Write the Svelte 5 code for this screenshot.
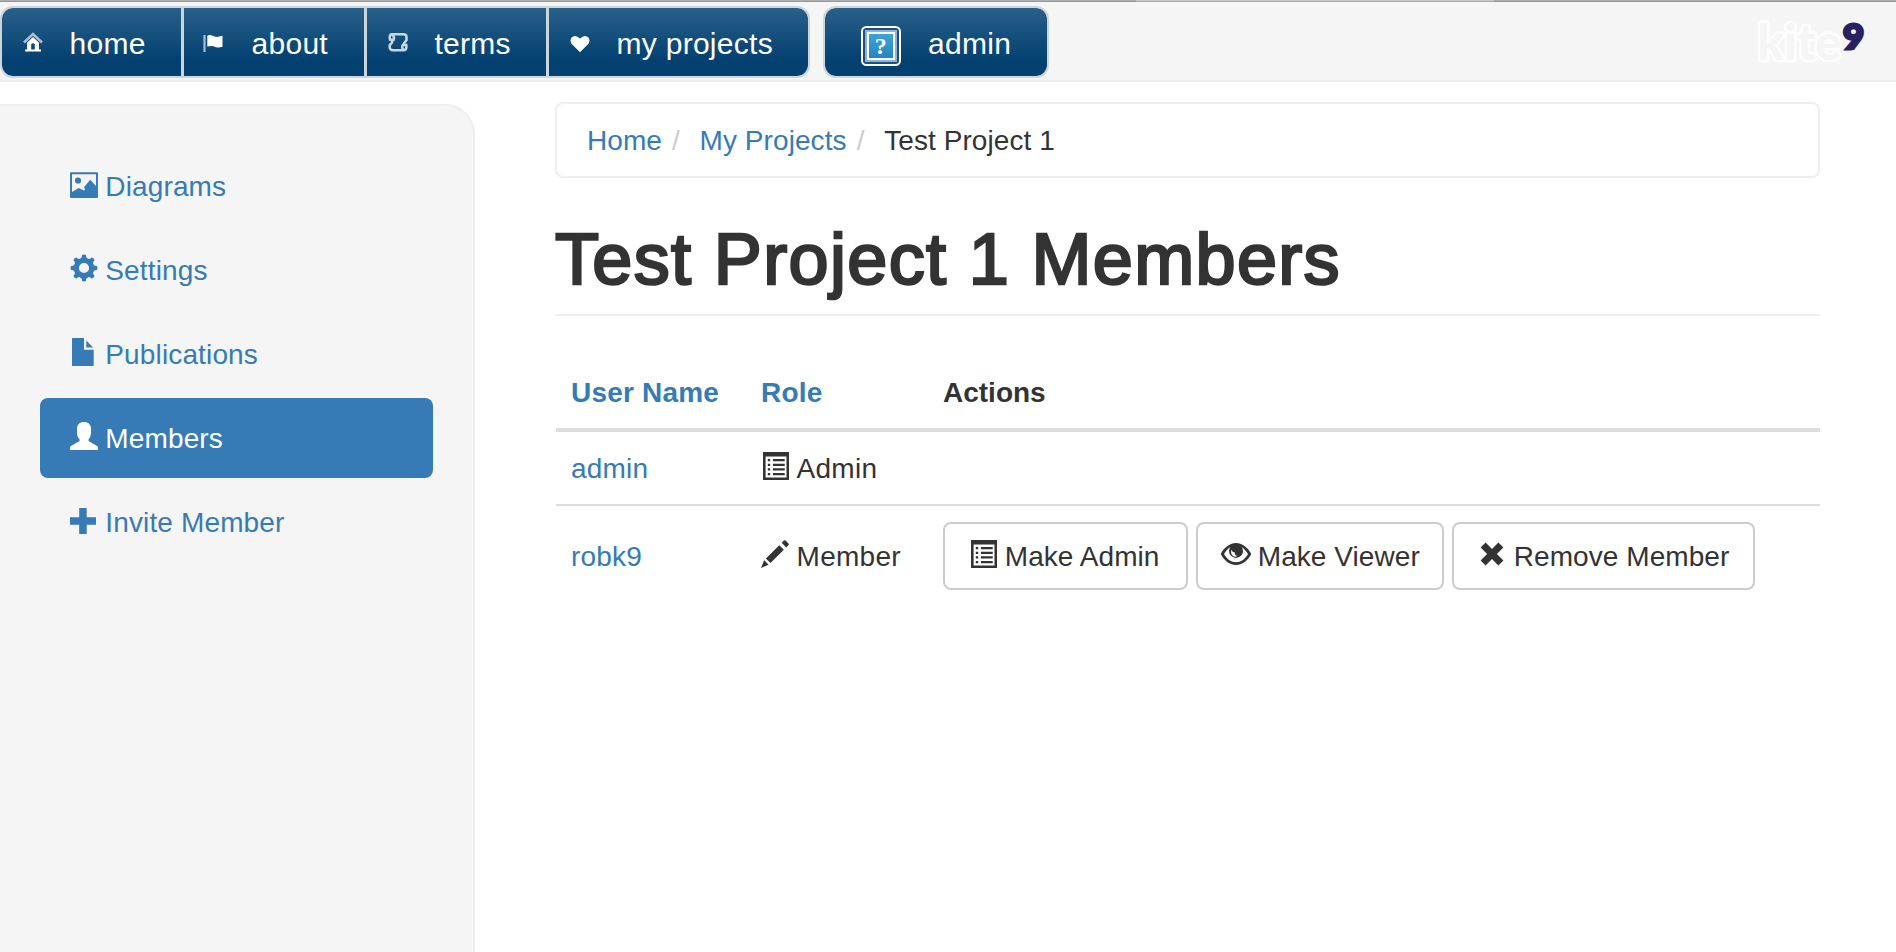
<script>
  const nav = [
    { label: 'home', icon: 'home', width: 179 },
    { label: 'about', icon: 'flag', width: 180 },
    { label: 'terms', icon: 'scroll', width: 179 },
    { label: 'my projects', icon: 'heart', width: 259 }
  ];
  const side = [
    { label: 'Diagrams', icon: 'picture' },
    { label: 'Settings', icon: 'cog' },
    { label: 'Publications', icon: 'file' },
    { label: 'Members', icon: 'user', active: true },
    { label: 'Invite Member', icon: 'plus' }
  ];
  const actions = [
    { label: 'Make Admin', icon: 'list', width: 245 },
    { label: 'Make Viewer', icon: 'eye', width: 248 },
    { label: 'Remove Member', icon: 'remove', width: 303 }
  ];
</script>

{#snippet glyph(name)}
  <svg class="glyph" viewBox="0 0 28 28" width="28" height="28" fill="currentColor" aria-hidden="true">
    {#if name === 'picture'}
      <path fill-rule="evenodd" d="M1 2.3H27Q28 2.3 28 3.3V27Q28 28 27 28H1Q0 28 0 27V3.3Q0 2.3 1 2.3ZM2 4.3V22L8.500 18L14 20.500L15.200 19.800L14 17.200L20.200 9.800L26 16V4.300Z" />
      <circle cx="8" cy="10.500" r="3.100" />
    {:else if name === 'cog'}
      <g transform="translate(14 14)">
        {#each [0, 45, 90, 135, 180, 225, 270, 315] as a}
          <path transform="rotate({a})" d="M-4.200-8L-2.200-11V-12.300Q-2-13.500 0-13.500Q2-13.500 2.200-12.300V-11L4.200-8Z" />
        {/each}
        <circle r="7.700" fill="none" stroke="currentColor" stroke-width="5.200" />
      </g>
    {:else if name === 'file'}
      <path d="M2.600 0H14V11.700H23.700V27.400Q23.700 28 23 28H2.600Q2 28 2 27.400V.6Q2 0 2.600 0ZM16.300 2.500L23 9.400H16.300Z" />
    {:else if name === 'user'}
      <path d="M14 0C18.500 0 21 2.700 21 7V10.500C21 13.500 19.800 16.200 18.600 17.300V19L27 24Q28 24.700 28 25.500V28H0V25.500Q0 24.700 1 24L9.600 19V17.300C8.200 16.200 7 13.500 7 10.500V7C7 2.700 9.500 0 14 0Z" />
    {:else if name === 'plus'}
      <path d="M9.200 2H16.700V11.200H26V18.700H16.700V28H9.200V18.700H0V11.200H9.200Z" />
    {:else if name === 'list'}
      <path fill-rule="evenodd" d="M2 0H28V28H2ZM4.600 4.400V25.500H25.500V4.400Z" />
      <path d="M6.800 7H9.200V9.300H6.800ZM11.900 7H23.700V9.300H11.900ZM6.800 11.700H9.200V14H6.800ZM11.900 11.700H23.700V14H11.900ZM6.800 16.300H9.200V18.600H6.800ZM11.900 16.300H23.700V18.600H11.900ZM6.800 21H9.200V23.300H6.800ZM11.900 21H23.700V23.300H11.900Z" />
    {:else if name === 'pencil'}
      <path d="M0 28L3.200 20.300L7.600 24.700ZM4.900 18.500L18.300 5.200L22.800 9.700L9.500 23.100ZM20.700 2.800L22.900.6Q23.700-.2 24.600.6L27.500 3.500Q28.300 4.300 27.500 5.100L25.200 7.400Z" />
    {:else if name === 'eye'}
      <path fill-rule="evenodd" d="M-1.300 14C2.500 7 8 3 14 3S25.500 7 29.300 14C25.500 21 20 25 14 25S2.500 21 -1.300 14ZM2 14.100C5 19.500 9.300 22.300 14 22.300S23 19.500 26 14.100C23 9 18.500 5.600 14 5.600S5 9 2 14.100Z" />
      <circle cx="14" cy="10.900" r="7" />
      <path d="M9.800 9.400Q7.800 13.300 11 15.900Q13.300 17.300 15.400 16Q12.300 15.500 12.800 12.300Q10 12.300 9.800 9.400Z" fill="#fff" />
    {:else if name === 'remove'}
      <path d="M7.600 2.600L14 9.100L20.400 2.600L25.400 7.600L18.900 14L25.400 20.400L20.400 25.400L14 18.900L7.600 25.400L2.600 20.400L9.100 14L2.600 7.600Z" />
    {/if}
  </svg>
{/snippet}

{#snippet navIcon(name)}
  <svg class="nav-icon {name}" viewBox="0 0 20 20" width="20" height="20" aria-hidden="true">
    {#if name === 'home'}
      <path d="M1 10.500L10 2L19 10.500" fill="none" stroke="#a9bed0" stroke-width="2.600" />
      <path fill-rule="evenodd" d="M10 5L16 10.800V17.500H18V19.500H2V17.500H4V10.800ZM8.200 12V17.500H11.800V12Q10 10.500 8.200 12Z" fill="#fff" />
    {:else if name === 'flag'}
      <path d="M1.500 2V19" stroke="#a9bed0" stroke-width="2.200" />
      <path d="M4.300 2.800Q7 1.300 10 3.100T19.500 2.800V13.800Q16 15 13 14.200Q9 12 4.300 13.600Z" fill="#fff" />
    {:else if name === 'scroll'}
      <path d="M3.500 2.200H15.500Q18.500 2.200 18.500 5V8L14.500 13.500Q13.500 17 16 18.300H5Q1.700 18.300 1.700 15V13.300L4 10.500V7.700L2 7.500Q1 3 3.500 2.200ZM4 2.500Q7 4.500 5.500 8H4M16 18.300Q19 17.500 18.300 13H15" fill="none" stroke="#c8d6e2" stroke-width="2.500" />
    {:else}
      <path d="M10 19.300L1.500 10.800Q-.5 7.500 1.500 4.500Q5.500 1 10 5.500Q14.500 1 18.500 4.500Q20.500 7.500 18.500 10.800Z" fill="#fff" />
    {/if}
  </svg>
{/snippet}

<div class="page">
  <div class="edge"></div>
  <header>
    <nav class="group">
      {#each nav as item}
        <a class="tab" href="#top" style="width: {item.width}px">
          {@render navIcon(item.icon)}
          <span>{item.label}</span>
        </a>
      {/each}
    </nav>
    <nav class="group">
      <a class="tab admin" href="#top">
        <svg viewBox="0 0 40 40" width="40" height="40" aria-hidden="true">
          <defs>
            <linearGradient id="tile" x1="0" y1="0" x2="0" y2="1">
              <stop offset="0" stop-color="#3fa3d6" />
              <stop offset="1" stop-color="#2684c0" />
            </linearGradient>
          </defs>
          <rect x="1" y="1" width="38" height="38" rx="4.500" fill="#19507f" stroke="#fff" stroke-width="2" />
          <rect x="4" y="4" width="32" height="32" fill="#8fb2d6" />
          <rect x="6" y="6" width="28" height="28" fill="#fff" />
          <rect x="8" y="8" width="24" height="24" fill="url(#tile)" />
          <text x="20" y="28" text-anchor="middle" class="mark">?</text>
        </svg>
        <span>admin</span>
      </a>
    </nav>
    <svg class="logo" viewBox="0 0 112 50" width="112" height="50">
      <text class="kite" x="2.500" y="44" textLength="84" lengthAdjust="spacingAndGlyphs">kite</text>
      <text class="nine" x="88" y="33" textLength="21" lengthAdjust="spacingAndGlyphs">9</text>
    </svg>
  </header>

  <div class="body">
    <aside>
      {#each side as item}
        <a href="#top" class="item" class:active={item.active}>{@render glyph(item.icon)}<span>{item.label}</span></a>
      {/each}
    </aside>

    <main>
      <div class="crumbs">
        <a href="#top">Home</a><i>/</i><a href="#top">My Projects</a><i>/</i><span>Test Project 1</span>
      </div>
      <h1>Test Project 1 Members</h1>
      <div class="table">
        <div class="row head">
          <a href="#top">User Name</a><a href="#top">Role</a><span>Actions</span>
        </div>
        <div class="row">
          <a href="#top">admin</a>
          <span class="with-icon">{@render glyph('list')}<span>Admin</span></span>
        </div>
        <div class="row last">
          <a href="#top">robk9</a>
          <span class="with-icon">{@render glyph('pencil')}<span>Member</span></span>
          <div class="actions">
            {#each actions as b}
              <button style="width: {b.width}px">{@render glyph(b.icon)}<span>{b.label}</span></button>
            {/each}
          </div>
        </div>
      </div>
    </main>
  </div>
</div>

<style>
  :global(body) { margin: 0; background: #fff; }
  .page, .page * { box-sizing: border-box; }
  .page {
    width: 1896px;
    height: 952px;
    overflow: hidden;
    display: flex;
    flex-direction: column;
    font: 28px/40px "Liberation Sans", Arial, sans-serif;
    color: #333;
  }
  a { color: #367bb5; text-decoration: none; }
  svg { display: block; flex: none; }

  .edge {
    height: 2px;
    flex: none;
    background: linear-gradient(90deg, #b0b0b0 1136px, #c8c8c8 1136px 1494px, #b0b0b0 1494px);
    border-bottom: 1px solid rgba(0, 0, 0, 0.150);
  }
  header {
    height: 80px;
    flex: none;
    display: flex;
    align-items: flex-start;
    gap: 13px;
    padding-top: 4px;
    background: #f5f5f5;
    border-bottom: 2px solid #eee;
  }
  .group {
    display: flex;
    gap: 3px;
    height: 72px;
    border: 2px solid #ccd5dc;
    border-radius: 13px;
    background: #ccd5dc;
    overflow: hidden;
  }
  .tab {
    display: flex;
    align-items: flex-start;
    height: 68px;
    padding: 14px 0 0 21px;
    gap: 26.500px;
    color: #fff;
    font-size: 30px;
    letter-spacing: 0.280px;
    background: linear-gradient(#2a6089, #044171 75%);
    white-space: nowrap;
  }
  .tab:first-child { border-radius: 11px 0 0 11px; }
  .tab:last-child { border-radius: 0 11px 11px 0; }
  .nav-icon { margin-top: 10px; }
  .nav-icon.flag { margin: 11px 2px 0 -2px; }
  .nav-icon.heart { margin-top: 11px; }
  .tab span { line-height: 44px; }
  .tab.admin { width: 222px; padding-left: 36px; gap: 27px; border-radius: 11px; }
  .admin svg { margin-top: 4px; }
  .mark { font: bold 24px "Liberation Serif", serif; fill: #fff; }
  .logo { margin: 10px 29px 0 auto; overflow: visible; }
  .kite {
    font: 900 49px Lato, sans-serif;
    fill: #f5f5f5;
    stroke: #fdfdfd;
    stroke-width: 5px;
    stroke-linejoin: round;
    paint-order: stroke;
  }
  .nine {
    font: 900 35px Lato, sans-serif;
    fill: #26215f;
    stroke: #26215f;
    stroke-width: 3px;
  }

  .body { flex: 1; display: flex; align-items: stretch; }
  aside {
    width: 475px;
    margin-top: 22px;
    padding: 40px 40px 0;
    display: flex;
    flex-direction: column;
    gap: 4px;
    background: #f5f5f5;
    border: 2px solid #eee;
    border-width: 2px 2px 0 0;
    border-top-right-radius: 30px;
  }
  .item {
    display: flex;
    gap: 7.300px;
    height: 80px;
    padding: 20px 30px;
    border-radius: 8px;
    letter-spacing: 0.140px;
  }
  .item.active { background: #367bb5; color: #fff; }
  .glyph { margin-top: 4px; overflow: visible; }
  .item span, .with-icon span, button span { padding-top: 1px; }

  main { width: 1265px; margin: 20px 0 0 80px; }
  .crumbs {
    display: flex;
    height: 76px;
    padding: 17px 30px 15px;
    border: 2px solid #eee;
    border-radius: 8px;
    letter-spacing: 0.080px;
  }
  .crumbs i { width: 37.500px; padding-left: 10px; font-style: normal; color: #ccc; }
  h1 {
    margin: 40px 0 0;
    height: 98px;
    padding-top: 1px;
    border-bottom: 2px solid #eee;
    font-size: 72px;
    line-height: 80px;
    font-weight: 400;
    letter-spacing: 1.350px;
    -webkit-text-stroke: 2.500px #333;
    white-space: nowrap;
  }
  .table { margin: 40px 0 0 1px; }
  .row {
    display: grid;
    grid-template-columns: 190px 182px 1fr;
    padding: 16px 0 16px 15px;
    border-bottom: 2px solid #ddd;
  }
  .row > a { padding-top: 1px; height: 40px; letter-spacing: 0.200px; }
  .row.head { font-weight: 700; border-bottom-width: 4px; }
  .row.head > span { padding-top: 1px; height: 40px; }
  .row.last { border-bottom: 0; }
  .row.last > a, .row.last > .with-icon { margin-top: 14px; }
  .with-icon { display: flex; gap: 7.600px; height: 40px; }
  .with-icon span { letter-spacing: 0.250px; }
  .actions { display: flex; gap: 8px; }
  button {
    display: flex;
    gap: 7.800px;
    height: 68px;
    padding: 12px 0 12px 24px;
    border: 2px solid #ccc;
    border-radius: 8px;
    background: #fff;
    color: #333;
    font: inherit;
    letter-spacing: 0.060px;
    white-space: nowrap;
  }
</style>
